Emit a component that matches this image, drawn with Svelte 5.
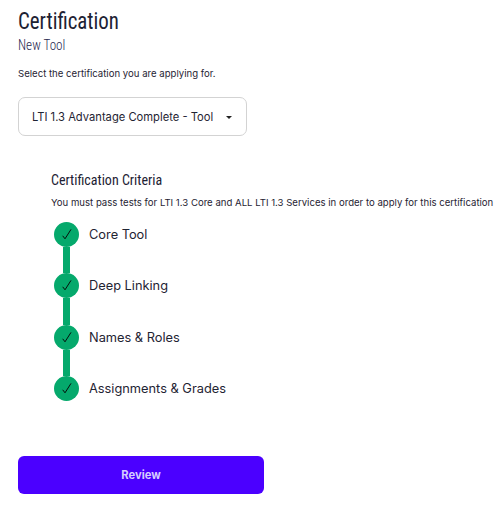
<script>
  const steps = ['Core Tool', 'Deep Linking', 'Names & Roles', 'Assignments & Grades'];
  let track = 'LTI 1.3 Advantage Complete - Tool';
</script>

<div class="page">
  <h1>Certification</h1>
  <h2>New Tool</h2>
  <p class="hint">Select the certification you are applying for.</p>

  <button class="select" type="button">
    <span>{track}</span>
    <i class="caret"></i>
  </button>

  <section class="criteria">
    <h3>Certification Criteria</h3>
    <p class="note">You must pass tests for LTI 1.3 Core and ALL LTI 1.3 Services in order to apply for this certification</p>
    <ul>
      {#each steps as step, i}
        <li class:last={i === steps.length - 1}>
          <div class="marker">
            <div class="dot">
              <svg width="12" height="13" viewBox="0 0 12 13" fill="none">
                <path d="M1.7 7.8 L4 10.8 L10 1.4" stroke="#05100b" stroke-width="1" />
              </svg>
            </div>
            {#if i < steps.length - 1}<div class="line"></div>{/if}
          </div>
          <span class="label">{step}</span>
        </li>
      {/each}
    </ul>
  </section>

  <button class="review" type="button">Review</button>
</div>

<style>
  :global(body) {
    margin: 0;
    background: #fff;
    font-family: Inter, "Liberation Sans", sans-serif;
    color: #1f2433;
  }

  .page {
    padding: 8px 0 0 18px;
    white-space: nowrap;
    overflow: hidden;
  }

  h1, h2, h3 {
    margin: 0;
    font-family: Roboto, sans-serif;
    font-stretch: 75%;
    font-weight: 400;
    color: #1d2233;
  }

  /* Roboto stops at 75% width, the heading face is narrower still */
  h1 {
    font-size: 24px;
    line-height: 26px;
    transform: scaleX(0.87);
    transform-origin: left;
  }

  h2 {
    margin-top: 3px;
    font-size: 14px;
    line-height: 17px;
    color: #1f2750;
    font-weight: 300;
    transform: scaleX(0.94);
    transform-origin: left;
  }

  .hint {
    margin: 13px 0 0;
    font-size: 9.6px;
    line-height: 14px;
  }

  .select {
    display: flex;
    align-items: center;
    justify-content: space-between;
    box-sizing: border-box;
    width: 229px;
    height: 39px;
    margin-top: 16px;
    padding: 0 14px 0 13px;
    background: #fff;
    border: 1px solid #d3d3d3;
    border-radius: 7px;
    font: inherit;
    font-size: 11.2px;
    color: #1f2433;
  }

  .caret {
    width: 0;
    height: 0;
    margin-top: 1px;
    border-left: 3.5px solid transparent;
    border-right: 3.5px solid transparent;
    border-top: 3.5px solid #222;
  }

  .criteria {
    margin: 36px 0 0 33px;
  }

  h3 {
    font-size: 14px;
    line-height: 17px;
  }

  .note {
    margin: 7px 0 0;
    font-size: 9.6px;
    line-height: 13px;
  }

  ul {
    list-style: none;
    margin: 13px 0 0 3px;
    padding: 0;
  }

  li {
    display: flex;
    height: 51.3px;
  }

  li.last {
    height: 25px;
  }

  .marker {
    display: flex;
    flex-direction: column;
    align-items: center;
    width: 25px;
  }

  .dot {
    display: flex;
    align-items: center;
    justify-content: center;
    flex: none;
    width: 25px;
    height: 25px;
    border-radius: 50%;
    background: #05a96c;
  }

  .line {
    flex: 1;
    width: 7px;
    background: #05a96c;
  }

  .label {
    margin-left: 10px;
    font-size: 12.8px;
    line-height: 25px;
  }

  .review {
    display: block;
    width: 246px;
    height: 38px;
    margin-top: 55px;
    background: #4b00ff;
    border: 0;
    border-radius: 6px;
    font: inherit;
    font-size: 11.2px;
    font-weight: 700;
    color: #d6ccff;
  }
</style>
